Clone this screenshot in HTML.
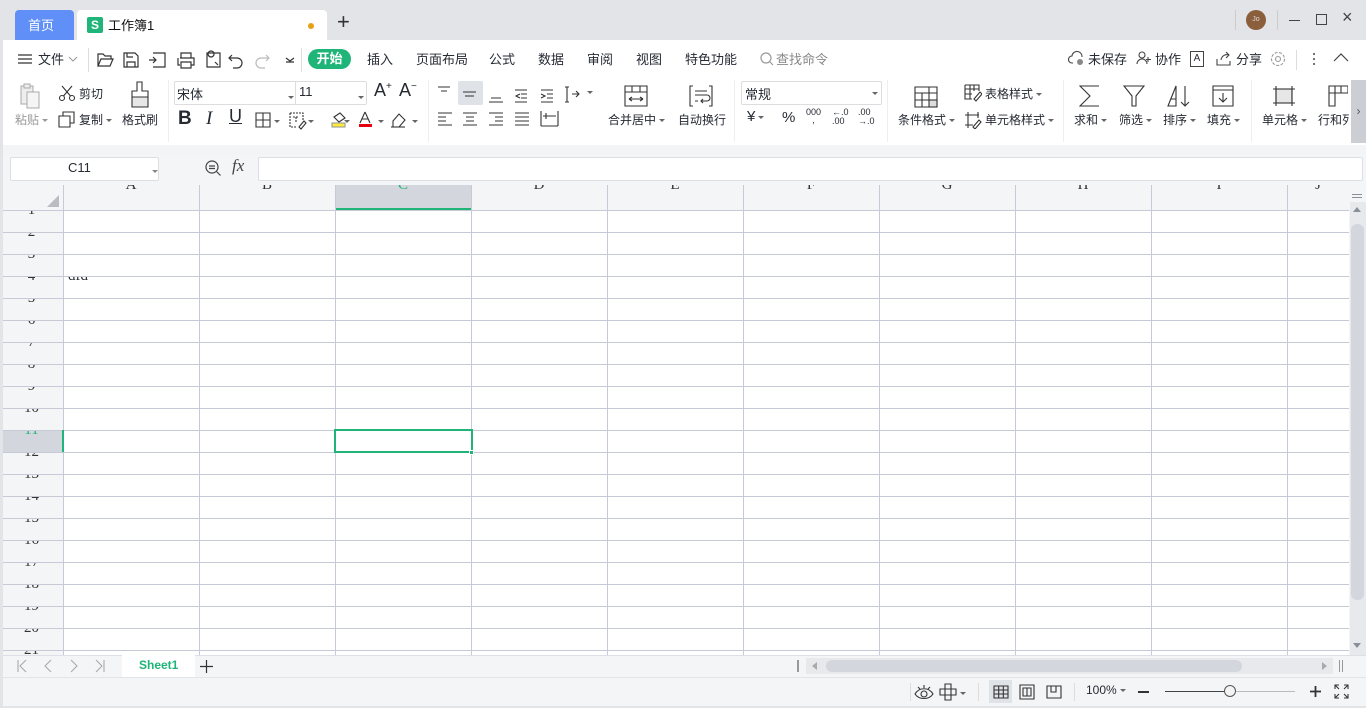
<!DOCTYPE html>
<html><head><meta charset="utf-8">
<style>
*{margin:0;padding:0;box-sizing:border-box}
body{width:1366px;height:708px;overflow:hidden;background:#e3e4e8;font-family:"Liberation Sans","Noto Sans CJK SC",sans-serif;font-size:12px;color:#262a33;position:relative}
.a{position:absolute}
.t{position:absolute;white-space:nowrap;margin-top:-2px}
.ic{position:absolute}
.caret{display:inline-block;width:0;height:0;border-left:3px solid transparent;border-right:3px solid transparent;border-top:3px solid #666;vertical-align:middle;margin-left:3px}
.rl{position:absolute;left:0;width:63px;height:22px;overflow:hidden;background:#f4f5f7}
.rl span{position:absolute;left:0;width:63px;text-align:center;top:-9px;font-family:"Liberation Serif",serif;font-size:15px;line-height:18px;color:#333}
.ch{position:absolute;top:185px;height:25px;width:136px;overflow:hidden;background:#f4f5f7}
.ch span{position:absolute;left:0;width:100%;text-align:center;top:-9px;font-family:"Liberation Serif",serif;font-size:15px;line-height:18px;color:#333}
</style></head><body>
<!-- title bar -->
<div class="a" style="left:15px;top:10px;width:59px;height:30px;background:#5f8ff7;border-radius:4px 4px 0 0"></div>
<div class="t" style="left:28px;top:17px;color:#fff;font-size:13px">首页</div>
<div class="a" style="left:77px;top:10px;width:250px;height:30px;background:#fff;border-radius:4px 4px 0 0"></div>
<div class="a" style="left:87px;top:17px;width:16px;height:16px;background:#1fb478;border-radius:2px;color:#fff;font-size:12px;text-align:center;line-height:16px;font-weight:bold">S</div>
<div class="t" style="left:108px;top:17px;font-size:13px;color:#111">工作簿1</div>
<div class="a" style="left:308px;top:23px;width:6px;height:6px;border-radius:50%;background:#e8a013"></div>
<div class="t" style="left:337px;top:11px;font-size:22px;color:#333;font-weight:300">+</div>
<div class="a" style="left:1235px;top:10px;width:1px;height:20px;background:#ccc"></div>
<div class="a" style="left:1246px;top:10px;width:20px;height:20px;border-radius:50%;background:#8b5e3c;color:#ddd;font-size:7px;text-align:center;line-height:20px">Jo</div>
<div class="a" style="left:1277px;top:10px;width:1px;height:20px;background:#ccc"></div>
<div class="a" style="left:1289px;top:20px;width:11px;height:1px;background:#444"></div>
<div class="a" style="left:1316px;top:14px;width:11px;height:11px;border:1.2px solid #444"></div>
<div class="t" style="left:1342px;top:9px;font-size:18px;color:#444;font-weight:300">×</div>

<!-- white menu & ribbon -->
<div class="a" style="left:3px;top:40px;width:1363px;height:105px;background:#fff"></div>
<div class="a" style="left:3px;top:145px;width:1363px;height:10px;background:#f3f4f6"></div>
<svg class="a" style="left:17px;top:53px" width="16" height="12"><path d="M1 2h14M1 6h14M1 10h14" stroke="#333" stroke-width="1.2"/></svg>
<div class="t" style="left:38px;top:51px;font-size:13px">文件</div>
<svg class="a" style="left:68px;top:56px" width="10" height="6"><path d="M1 1l4 4 4-4" stroke="#999" fill="none"/></svg>
<div class="a" style="left:88px;top:48px;width:1px;height:24px;background:#ddd"></div>
<svg class="a" style="left:96px;top:50px" width="200" height="20" fill="none" stroke="#333" stroke-width="1.2">
<path d="M2 16V4h5l2 2h6v3M2 16l3-7h12l-3 7z"/>
<path d="M28 3h11l3 3v11H28zM31 17v-5h8v5M31 3v4h6"/>
<path d="M57 3h12v14H57M53 10h7M57 7l3 3-3 3"/>
<path d="M84 8h14v7h-3M84 15h-2V8M85 8V3h10v5M85 12h10v6H85z"/>
<path d="M111 3h13v14h-13zM115 7a3 3 0 1 1 0.1 0zM119 12l3 3"/>
<path d="M136 5l-3 3 3 3M133 8h8a5 5 0 0 1 0 10h-4"/>
<path d="M170 5l3 3-3 3M173 8h-8a5 5 0 0 0 0 10h4" stroke="#bbb"/>
<path d="M190 8l4 3 4-3M190 12h8"/>
</svg>
<div class="a" style="left:301px;top:48px;width:1px;height:24px;background:#ddd"></div>
<div class="a" style="left:308px;top:49px;width:43px;height:20px;background:#1fb478;border-radius:10px;color:#fff;font-weight:bold;font-size:13px;text-align:center;line-height:20px">开始</div>
<div class="t" style="left:367px;top:51px;font-size:13px">插入</div>
<div class="t" style="left:416px;top:51px;font-size:13px">页面布局</div>
<div class="t" style="left:489px;top:51px;font-size:13px">公式</div>
<div class="t" style="left:538px;top:51px;font-size:13px">数据</div>
<div class="t" style="left:587px;top:51px;font-size:13px">审阅</div>
<div class="t" style="left:636px;top:51px;font-size:13px">视图</div>
<div class="t" style="left:685px;top:51px;font-size:13px">特色功能</div>
<svg class="a" style="left:760px;top:52px" width="14" height="14" fill="none" stroke="#999" stroke-width="1.2"><circle cx="6" cy="6" r="5"/><path d="M10 10l3 3"/></svg>
<div class="t" style="left:776px;top:51px;font-size:13px;color:#888">查找命令</div>
<svg class="a" style="left:1068px;top:50px" width="18" height="16" fill="none" stroke="#444" stroke-width="1.1"><path d="M5 13H4a3.5 3.5 0 0 1 0-7 5 5 0 0 1 10 1"/><circle cx="12" cy="12" r="3" fill="#888" stroke="none"/></svg>
<div class="t" style="left:1088px;top:51px;font-size:13px">未保存</div>
<svg class="a" style="left:1136px;top:51px" width="16" height="14" fill="none" stroke="#444" stroke-width="1.1"><circle cx="6" cy="4" r="3"/><path d="M1 13a5 5 0 0 1 10 0M12 6v5M10 8.5h5"/></svg>
<div class="t" style="left:1155px;top:51px;font-size:13px">协作</div>
<div class="a" style="left:1190px;top:51px;width:14px;height:16px;border:1.1px solid #444;font-size:10px;text-align:center;line-height:14px">A</div>
<svg class="a" style="left:1216px;top:51px" width="16" height="15" fill="none" stroke="#444" stroke-width="1.1"><path d="M1 8v6h13V10M5 9a6 6 0 0 1 8-5M10 1l3 3-3 3"/></svg>
<div class="t" style="left:1236px;top:51px;font-size:13px">分享</div>
<svg class="a" style="left:1270px;top:51px" width="16" height="16" fill="none" stroke="#999" stroke-width="1.1"><circle cx="8" cy="8" r="6.5" stroke-dasharray="3 1.5"/><circle cx="8" cy="8" r="2.5"/></svg>
<div class="a" style="left:1296px;top:50px;width:1px;height:20px;background:#ddd"></div>
<svg class="a" style="left:1312px;top:52px" width="4" height="14" fill="#666"><circle cx="2" cy="2" r="1.1"/><circle cx="2" cy="7" r="1.1"/><circle cx="2" cy="12" r="1.1"/></svg>
<svg class="a" style="left:1333px;top:53px" width="16" height="10" fill="none" stroke="#444" stroke-width="1.2"><path d="M1 8l7-7 7 7"/></svg>

<!-- ribbon -->
<svg class="a" style="left:18px;top:82px" width="28" height="28" fill="#eee" stroke="#aaa"><path d="M3 4h12v18H3z"/><path d="M9 10h12v16H9z" fill="#f5f5f5"/><path d="M6 2h6v4H6z"/></svg>
<div class="t" style="left:15px;top:113px;font-size:12px;color:#999">粘贴<span class="caret" style="border-top-color:#999"></span></div>
<svg class="a" style="left:58px;top:84px" width="18" height="18" fill="none" stroke="#333" stroke-width="1.1"><circle cx="4" cy="14" r="2.5"/><circle cx="14" cy="14" r="2.5"/><path d="M5.5 12L14 2M12.5 12L4 2"/></svg>
<div class="t" style="left:79px;top:87px">剪切</div>
<svg class="a" style="left:58px;top:111px" width="18" height="18" fill="#fff" stroke="#333" stroke-width="1.1"><path d="M5 1h11v11H5z"/><path d="M1 5h11v11H1z"/></svg>
<div class="t" style="left:79px;top:113px">复制<span class="caret"></span></div>
<svg class="a" style="left:129px;top:81px" width="22" height="28" fill="none" stroke="#333" stroke-width="1.1"><path d="M8 1h5v9h6v6H3v-6h5z"/><path d="M3 16h16v10H3z" fill="#e7e7e7"/></svg>
<div class="t" style="left:122px;top:113px">格式刷</div>
<div class="a" style="left:168px;top:80px;width:1px;height:62px;background:#eee"></div>
<div class="a" style="left:174px;top:81px;width:193px;height:24px;border:1px solid #ddd;border-radius:2px"></div>
<div class="a" style="left:295px;top:82px;width:1px;height:22px;background:#ddd"></div>
<div class="t" style="left:177px;top:86px;font-size:13px">宋体</div>
<div class="a" style="left:285px;top:90px" ><span class="caret"></span></div>
<div class="t" style="left:299px;top:86px;font-size:13px">11</div>
<div class="a" style="left:355px;top:90px" ><span class="caret"></span></div>
<div class="t" style="left:374px;top:82px;font-size:18px;font-weight:300">A<sup style="font-size:10px">+</sup></div>
<div class="t" style="left:399px;top:82px;font-size:18px;font-weight:300">A<sup style="font-size:10px">−</sup></div>
<div class="t" style="left:178px;top:110px;font-size:19px;font-weight:bold">B</div>
<div class="t" style="left:206px;top:110px;font-size:19px;font-style:italic;font-family:'Liberation Serif',serif">I</div>
<div class="t" style="left:229px;top:108px;font-size:18px;text-decoration:underline;font-weight:300">U</div>
<svg class="a" style="left:255px;top:111px" width="180" height="20" fill="none" stroke="#333" stroke-width="1.1">
<path d="M1 2h14v14H1zM8 2v14M1 9h14"/>
<path d="M35 2h13v7M35 2v14h6M38 6h6M41 6v6" stroke-dasharray="2 1"/><path d="M44 16l5-6 2 2-5 6z"/>
<path d="M79 6l6-4 5 5-6 4z"/><rect x="77" y="12" width="13" height="4" fill="#ffeb3b" stroke="#999"/>
<path d="M110 1l-5 11M110 1l5 11M107 8h6"/><rect x="104" y="13" width="13" height="3" fill="#e60012" stroke="none"/>
<path d="M138 10l6-7 6 6-6 7h-6z"/><path d="M136 16h14"/>
</svg>
<div class="t" style="left:271px;top:116px"><span class="caret"></span></div>
<div class="t" style="left:305px;top:116px"><span class="caret"></span></div>
<div class="t" style="left:341px;top:116px"><span class="caret"></span></div>
<div class="t" style="left:375px;top:116px"><span class="caret"></span></div>
<div class="t" style="left:409px;top:116px"><span class="caret"></span></div>
<div class="a" style="left:428px;top:80px;width:1px;height:62px;background:#eee"></div>
<div class="a" style="left:458px;top:81px;width:25px;height:24px;background:#dfe2e7;border-radius:2px"></div>
<svg class="a" style="left:435px;top:84px" width="160" height="50" fill="none" stroke="#333" stroke-width="1.1">
<path d="M3 3h12M6 7h6"/><path d="M28 8h13M30 12h9"/><path d="M56 14h10M54 18h14"/>
<path d="M80 6h12M86 10h6M86 14h6M80 18h12M85 10l-4 2 4 2"/>
<path d="M106 6h12M112 10h6M112 14h6M106 18h12M106 10l4 2-4 2"/>
<path d="M132 3v15M130 3h4M130 18h4M137 10h7M141 7l3 3-3 3"/>
<path d="M3 29h14M3 33h8M3 37h8M3 41h14"/>
<path d="M28 29h14M31 33h8M31 37h8M28 41h14"/>
<path d="M54 29h14M60 33h8M60 37h8M54 41h14"/>
<path d="M80 29h14M80 33h14M80 37h14M80 41h14"/>
<path d="M106 27v15M123 27v15M106 42h17M108 32h13M111 29v6"/>
</svg>
<div class="t" style="left:584px;top:87px"><span class="caret"></span></div>
<svg class="a" style="left:624px;top:85px" width="24" height="22" fill="none" stroke="#333" stroke-width="1.1"><path d="M1 1h22v20H1zM1 7h22M8 1v6M16 1v6M5 14h14M5 14l3-2M5 14l3 2M19 14l-3-2M19 14l-3 2"/></svg>
<div class="t" style="left:608px;top:113px">合并居中<span class="caret"></span></div>
<svg class="a" style="left:689px;top:85px" width="24" height="22" fill="none" stroke="#333" stroke-width="1.1"><path d="M4 1H1v20h3M20 1h3v20h-3M6 6h12M6 10h12a3 3 0 0 1 0 6h-6M14 14l-2 2 2 2M6 16h3"/></svg>
<div class="t" style="left:678px;top:113px">自动换行</div>
<div class="a" style="left:734px;top:80px;width:1px;height:62px;background:#eee"></div>
<div class="a" style="left:741px;top:81px;width:141px;height:24px;border:1px solid #ddd;border-radius:2px"></div>
<div class="t" style="left:745px;top:86px;font-size:13px">常规</div>
<div class="t" style="left:869px;top:88px"><span class="caret"></span></div>
<div class="t" style="left:747px;top:110px;font-size:15px">¥<span class="caret"></span></div>
<div class="t" style="left:782px;top:111px;font-size:15px">%</div>
<div class="t" style="left:806px;top:110px;font-size:9px;line-height:8px;text-align:center">000<br>,</div>
<div class="t" style="left:832px;top:110px;font-size:9px;line-height:9px">←.0<br>.00</div>
<div class="t" style="left:858px;top:110px;font-size:9px;line-height:9px">.00<br>→.0</div>
<div class="a" style="left:887px;top:80px;width:1px;height:62px;background:#eee"></div>
<svg class="a" style="left:914px;top:86px" width="24" height="22" fill="none" stroke="#333" stroke-width="1.1"><path d="M1 1h22v20H1zM1 7h22M1 14h22M8 7v14M15 1v13"/><rect x="15" y="14" width="8" height="7" fill="#ddd"/></svg>
<div class="t" style="left:898px;top:113px">条件格式<span class="caret"></span></div>
<svg class="a" style="left:964px;top:84px" width="18" height="18" fill="none" stroke="#333" stroke-width="1.1"><path d="M1 1h14v6M1 1v14h7M1 5h14M1 10h7M6 1v14M10 1v6M10 15l6-7 2 2-6 7z"/></svg>
<div class="t" style="left:985px;top:87px">表格样式<span class="caret"></span></div>
<svg class="a" style="left:964px;top:111px" width="18" height="18" fill="none" stroke="#333" stroke-width="1.1"><path d="M4 1v16M1 4h14M1 14h8M14 1v6M9 16l6-7 2 2-6 7z"/></svg>
<div class="t" style="left:985px;top:113px">单元格样式<span class="caret"></span></div>
<div class="a" style="left:1063px;top:80px;width:1px;height:62px;background:#eee"></div>
<svg class="a" style="left:1079px;top:85px" width="22" height="22" fill="none" stroke="#333" stroke-width="1.1"><path d="M20 1H1l10 10L1 21h19"/></svg>
<div class="t" style="left:1074px;top:113px">求和<span class="caret"></span></div>
<svg class="a" style="left:1123px;top:85px" width="22" height="22" fill="none" stroke="#333" stroke-width="1.1"><path d="M1 1h20l-8 10v10h-4V11z"/></svg>
<div class="t" style="left:1119px;top:113px">筛选<span class="caret"></span></div>
<svg class="a" style="left:1167px;top:85px" width="24" height="22" fill="none" stroke="#333" stroke-width="1.1"><path d="M9 1L1 21h8zM4 14h5M18 1v20M14 17l4 4 4-4"/></svg>
<div class="t" style="left:1163px;top:113px">排序<span class="caret"></span></div>
<svg class="a" style="left:1212px;top:85px" width="22" height="22" fill="none" stroke="#333" stroke-width="1.1"><path d="M1 1h20v20H1zM1 5h20M11 8v9M7 13l4 4 4-4"/></svg>
<div class="t" style="left:1207px;top:113px">填充<span class="caret"></span></div>
<div class="a" style="left:1251px;top:80px;width:1px;height:62px;background:#eee"></div>
<svg class="a" style="left:1272px;top:85px" width="24" height="22" fill="none" stroke="#333" stroke-width="1.1"><rect x="4" y="4" width="16" height="14" fill="#e7e7e7"/><path d="M4 1v20M20 1v20M1 4h22M1 18h22"/></svg>
<div class="t" style="left:1262px;top:113px">单元格<span class="caret"></span></div>
<svg class="a" style="left:1328px;top:85px" width="20" height="22" fill="none" stroke="#333" stroke-width="1.1"><path d="M1 1h19v7H1zM1 8v13h6V1M13 1v7"/></svg>
<div class="t" style="left:1318px;top:113px;width:31px;overflow:hidden">行和列</div>
<div class="a" style="left:1351px;top:80px;width:15px;height:63px;background:#ccced3;color:#555;text-align:center;line-height:63px;font-size:12px">›</div>

<!-- formula bar -->
<div class="a" style="left:3px;top:155px;width:1363px;height:30px;background:#f4f5f7"></div>
<div class="a" style="left:10px;top:157px;width:149px;height:24px;background:#fff;border:1px solid #dcdfe4;border-radius:2px"></div>
<div class="t" style="left:68px;top:162px;font-size:13px">C11</div>
<div class="t" style="left:149px;top:166px"><span class="caret" style="border-top-color:#888"></span></div>
<svg class="a" style="left:205px;top:160px" width="18" height="18" fill="none" stroke="#444" stroke-width="1.2"><circle cx="7" cy="7" r="6"/><path d="M4 6h6M4 8.5h6M11.5 11.5l4 4"/></svg>
<div class="t" style="left:232px;top:158px;font-size:17px;font-style:italic;font-family:'Liberation Serif',serif;color:#444">fx</div>
<div class="a" style="left:258px;top:157px;width:1105px;height:24px;background:#fff;border:1px solid #dcdfe4;border-radius:2px"></div>

<!-- grid -->
<div class="a" style="left:3px;top:185px;width:1346px;height:470px;background:#fff;overflow:hidden"></div>
<div class="a" style="left:3px;top:185px;width:60px;height:25px;background:#f4f5f7"></div>
<svg class="a" style="left:46px;top:194px" width="14" height="14"><path d="M13 1v12H1z" fill="#b9bcc2"/></svg>
<div class="ch" style="left:63px"><span>A</span></div>
<div class="ch" style="left:199px"><span>B</span></div>
<div class="ch" style="left:335px;background:#d3d6dd"><span style="color:#1fb478">C</span></div>
<div class="ch" style="left:471px"><span>D</span></div>
<div class="ch" style="left:607px"><span>E</span></div>
<div class="ch" style="left:743px"><span>F</span></div>
<div class="ch" style="left:879px"><span>G</span></div>
<div class="ch" style="left:1015px"><span>H</span></div>
<div class="ch" style="left:1151px"><span>I</span></div>
<div class="ch" style="left:1287px;width:62px"><span>J</span></div>
<div class="a" style="left:335px;top:208px;width:137px;height:2px;background:#1fb478"></div>

<div class="rl" style="top:210px"><span>1</span></div>
<div class="rl" style="top:232px"><span>2</span></div>
<div class="rl" style="top:254px"><span>3</span></div>
<div class="rl" style="top:276px"><span>4</span></div>
<div class="rl" style="top:298px"><span>5</span></div>
<div class="rl" style="top:320px"><span>6</span></div>
<div class="rl" style="top:342px"><span>7</span></div>
<div class="rl" style="top:364px"><span>8</span></div>
<div class="rl" style="top:386px"><span>9</span></div>
<div class="rl" style="top:408px"><span>10</span></div>
<div class="rl" style="top:430px;background:#d3d6dd"><span style="color:#1fb478">11</span></div>
<div class="rl" style="top:452px"><span>12</span></div>
<div class="rl" style="top:474px"><span>13</span></div>
<div class="rl" style="top:496px"><span>14</span></div>
<div class="rl" style="top:518px"><span>15</span></div>
<div class="rl" style="top:540px"><span>16</span></div>
<div class="rl" style="top:562px"><span>17</span></div>
<div class="rl" style="top:584px"><span>18</span></div>
<div class="rl" style="top:606px"><span>19</span></div>
<div class="rl" style="top:628px"><span>20</span></div>
<div class="rl" style="top:650px;height:5px"><span>21</span></div>
<div class="a" style="left:0;top:185px;width:3px;height:470px;background:#e3e4e8"></div>
<div class="a" style="left:66px;top:276px;width:60px;height:22px;overflow:hidden"><span style="position:absolute;top:-9px;left:2px;font-family:'Liberation Serif',serif;font-size:15px;line-height:18px">dfd</span></div>

<svg class="a" style="left:0;top:185px" width="1349" height="470">
<g stroke="#c5cad6" stroke-width="1">
<path d="M63.5 0V470M199.5 0V470M335.5 0V470M471.5 0V470M607.5 0V470M743.5 0V470M879.5 0V470M1015.5 0V470M1151.5 0V470M1287.5 0V470"/>
<path d="M3 25.5H1349M3 47.5H1349M3 69.5H1349M3 91.5H1349M3 113.5H1349M3 135.5H1349M3 157.5H1349M3 179.5H1349M3 201.5H1349M3 223.5H1349M3 245.5H1349M3 267.5H1349M3 289.5H1349M3 311.5H1349M3 333.5H1349M3 355.5H1349M3 377.5H1349M3 399.5H1349M3 421.5H1349M3 443.5H1349M3 465.5H1349"/>
</g>
</svg>
<div class="a" style="left:62px;top:430px;width:2px;height:22px;background:#1fb478"></div>
<div class="a" style="left:334px;top:429px;width:139px;height:24px;border:2px solid #1fb478"></div>
<div class="a" style="left:469px;top:450px;width:5px;height:5px;background:#1fb478;border:1px solid #fff"></div>

<!-- vertical scrollbar -->
<div class="a" style="left:1349px;top:185px;width:17px;height:470px;background:#f4f5f7"></div>
<div class="a" style="left:1352px;top:194px;width:10px;height:1px;background:#8a8f99;box-shadow:0 3px 0 #8a8f99"></div>
<div class="a" style="left:1350px;top:202px;width:16px;height:453px;background:#e8e9ec"></div>
<svg class="a" style="left:1353px;top:207px" width="8" height="5"><path d="M0 5L4 0 8 5z" fill="#8a8f99"/></svg>
<div class="a" style="left:1351px;top:224px;width:13px;height:376px;background:#d3d6dd;border-radius:6px"></div>
<svg class="a" style="left:1353px;top:643px" width="8" height="5"><path d="M0 0L4 5 8 0z" fill="#8a8f99"/></svg>

<!-- sheet bar -->
<div class="a" style="left:3px;top:655px;width:1363px;height:22px;background:#f4f5f7;border-top:1px solid #dcdfe4"></div>
<svg class="a" style="left:15px;top:659px" width="95" height="14" fill="none" stroke="#aaa" stroke-width="1.1"><path d="M3 1v12M11 1L5 7l6 6M36 1l-6 6 6 6M56 1l6 6-6 6M81 1l6 6-6 6M89 1v12"/></svg>
<div class="a" style="left:122px;top:655px;width:73px;height:22px;background:#fff"></div>
<div class="t" style="left:139px;top:660px;font-size:12px;font-weight:bold;color:#1fb478">Sheet1</div>
<svg class="a" style="left:200px;top:660px" width="13" height="13" stroke="#333" stroke-width="1.2"><path d="M6.5 0v13M0 6.5h13"/></svg>
<div class="a" style="left:797px;top:660px;width:2px;height:12px;border-left:1px solid #999;border-right:1px solid #999"></div>
<div class="a" style="left:806px;top:658px;width:527px;height:16px;background:#e8e9ec"></div>
<svg class="a" style="left:812px;top:662px" width="5" height="8"><path d="M5 0L0 4 5 8z" fill="#aaa"/></svg>
<div class="a" style="left:826px;top:660px;width:416px;height:12px;background:#d3d6dd;border-radius:6px"></div>
<svg class="a" style="left:1322px;top:662px" width="5" height="8"><path d="M0 0L5 4 0 8z" fill="#aaa"/></svg>
<div class="a" style="left:1339px;top:660px;width:1px;height:12px;background:#999;box-shadow:3px 0 0 #999"></div>

<!-- status bar -->
<div class="a" style="left:3px;top:677px;width:1363px;height:29px;background:#f4f5f7;border-top:1px solid #e3e4e8"></div>
<div class="a" style="left:910px;top:683px;width:1px;height:18px;background:#ddd"></div>
<svg class="a" style="left:914px;top:683px" width="20" height="18" fill="none" stroke="#333" stroke-width="1.1"><path d="M1 11c4-7 14-7 18 0c-4 6-14 6-18 0z"/><circle cx="10" cy="11" r="3"/><path d="M10 2v3M4 4l2 2M16 4l-2 2"/></svg>
<svg class="a" style="left:939px;top:683px" width="18" height="18" fill="none" stroke="#333" stroke-width="1.1"><path d="M6 1h6v5h5v6h-5v5H6v-5H1V6h5zM6 6h6v6H6z"/></svg>
<div class="t" style="left:957px;top:688px"><span class="caret"></span></div>
<div class="a" style="left:978px;top:683px;width:1px;height:18px;background:#ddd"></div>
<div class="a" style="left:989px;top:680px;width:23px;height:23px;background:#dfe2e7"></div>
<svg class="a" style="left:993px;top:684px" width="80" height="16" fill="none" stroke="#333" stroke-width="1.1"><path d="M1 2h14v12H1zM1 6h14M1 10h14M5.7 2v12M10.3 2v12"/><path d="M27 1h14v14H27zM30 4h8v8h-8zM34 4v8"/><path d="M54 2h14v12H54zM58 2v6h5V2"/></svg>
<div class="a" style="left:1074px;top:683px;width:1px;height:18px;background:#ddd"></div>
<div class="t" style="left:1086px;top:685px;font-size:12px">100%<span class="caret"></span></div>
<div class="a" style="left:1138px;top:691px;width:11px;height:2px;background:#333"></div>
<div class="a" style="left:1165px;top:691px;width:60px;height:1px;background:#444"></div>
<div class="a" style="left:1225px;top:691px;width:70px;height:1px;background:#bbb"></div>
<div class="a" style="left:1224px;top:685px;width:12px;height:12px;border-radius:50%;background:#f4f4f4;border:1px solid #555"></div>
<svg class="a" style="left:1310px;top:686px" width="11" height="11" stroke="#333" stroke-width="1.8"><path d="M5.5 0v11M0 5.5h11"/></svg>
<svg class="a" style="left:1334px;top:684px" width="15" height="15" fill="none" stroke="#333" stroke-width="1.1"><path d="M1 5V1h4M1 1l4 4M10 1h4v4M14 1l-4 4M1 10v4h4M1 14l4-4M14 10v4h-4M14 14l-4-4"/></svg>
</body></html>
